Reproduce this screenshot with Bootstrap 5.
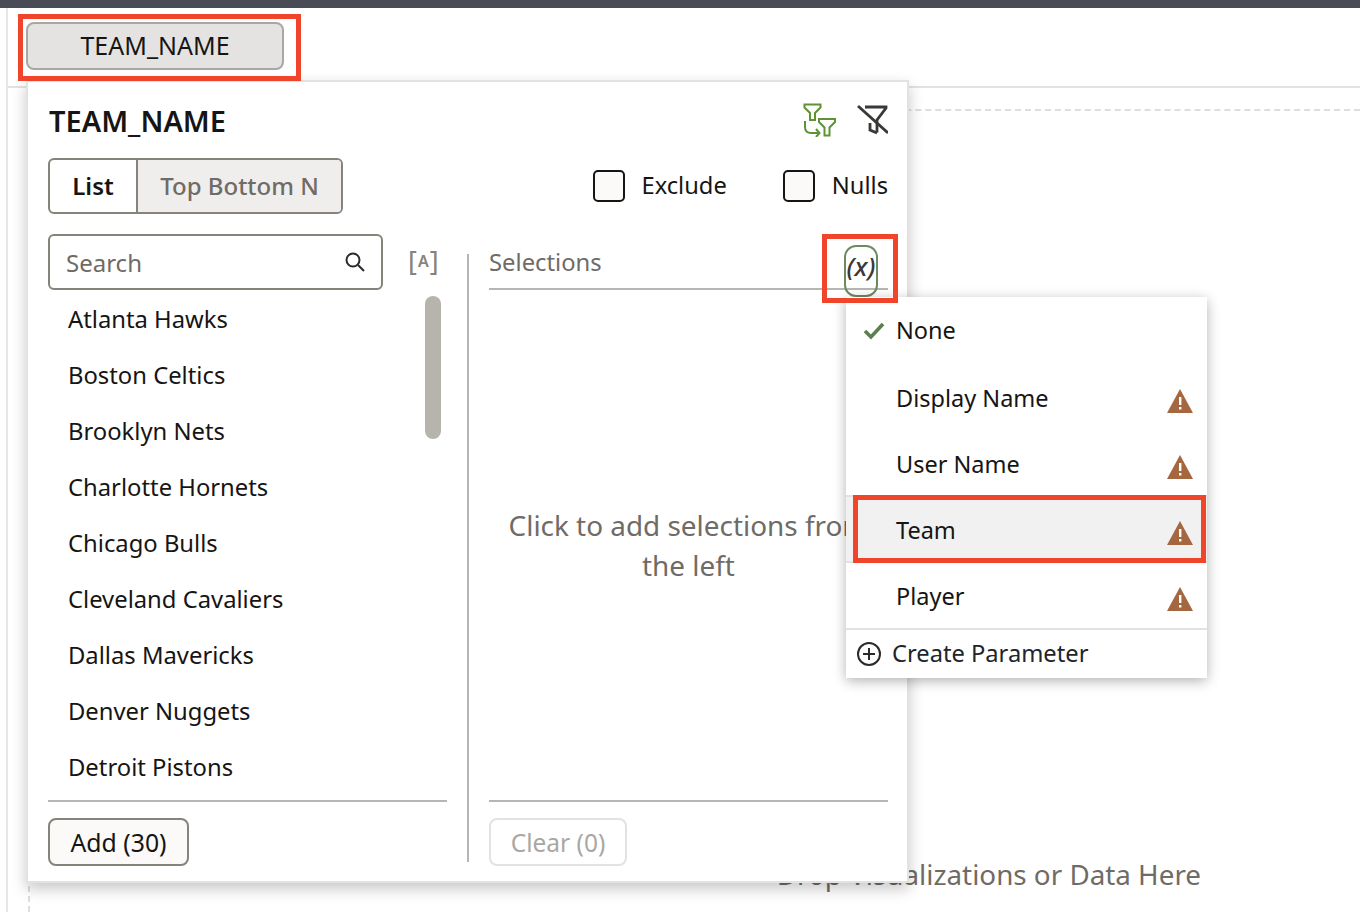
<!DOCTYPE html>
<html lang="en">
  <head>
    <meta charset="UTF-8" />
    <meta name="viewport" content="width=device-width, initial-scale=1" />
    <title>Filter TEAM_NAME</title>
    <link href="https://cdn.jsdelivr.net/npm/bootstrap@5.3.0/dist/css/bootstrap.min.css" rel="stylesheet" />
    <style>
      html, body { height: 912px; overflow: hidden; }
      body { font-family: "Noto Sans", sans-serif; font-size: 23.8px; color: #161513; background: #fff; position: relative; }
      .top-strip { height: 8px; background: #4a4c55; }
      .filter-bar { height: 80px; margin-left: 6px; border-left: 2px solid #e8e7e5; border-bottom: 2px solid #e4e2e0; }
      .work-area { margin-left: 6px; border-left: 2px solid #e8e7e5; height: 824px; padding: 21px 0 0 20px; }
      .drop-canvas { height: 803px; border-top: 2px dashed #dfdedc; border-left: 2px dashed #dfdedc; padding: 743px 159px 0 0; font-size: 27.8px; color: #6f6b66; }

      .red-box { position: absolute; border: 5px solid #f0452a; pointer-events: none; z-index: 5; }
      .red-chip { left: 18px; top: 14px; width: 283px; height: 67px; }
      .red-var { left: 822px; top: 234px; width: 76px; height: 69px; }
      .red-team { left: 853px; top: 495px; width: 353px; height: 68px; }

      .chip-btn { position: absolute; left: 26px; top: 22px; width: 258px; height: 48px; z-index: 3; background: #e4e3e1; border: 2px solid #a9a7a3; border-radius: 8px; font-size: 25px; color: #161513; padding: 0; }

      .filter-popup { position: absolute; left: 26px; top: 80px; width: 883px; height: 803px; background: #fff; border: 2px solid #e4e2e0; box-shadow: 0 6px 14px rgba(0,0,0,.22); z-index: 2; padding: 0 19px 0 20px; }
      .popup-head { height: 76px; }
      .popup-title { font-size: 29px; font-weight: 600; margin: 0; line-height: 1; padding-left: 1px; }
      .tool-icons { gap: 19px; }
      .mode-row { height: 56px; margin-bottom: 20px; }
      .mode-group { border: 2px solid #86827c; border-radius: 6px; overflow: hidden; height: 56px; }
      .mode-item { font-size: 24px; line-height: 52px; }
      .mode-on { font-weight: 600; width: 88px; text-align: center; border-right: 2px solid #86827c; }
      .mode-off { background: #efeeec; color: #6f6b66; font-weight: 500; width: 203px; text-align: center; }
      .check-pair { gap: 17px; font-size: 23.7px; }
      .check-pair .form-check-input { width: 32px; height: 32px; margin: 0; background-color: #fbfaf9; border: 2px solid #161513; border-radius: 5px; }
      .check-gap { gap: 56px; }

      .pane-wrap { height: 632px; }
      .left-pane { width: 399px; }
      .search-row { height: 56px; }
      .search-box { width: 335px; height: 56px; border: 2px solid #86827c; border-radius: 6px; padding: 0 16px; }
      .search-box input { border: 0; outline: 0; padding: 2px 0 0; background: transparent; font-size: 24px; width: 100%; }
      .search-box input::placeholder { color: #6f6b66; opacity: 1; }
      .case-tag { font-size: 27px; line-height: 1; color: #86827c; margin-left: 25px; margin-top: -3px; display: flex; align-items: center; gap: 1px; }
      .case-tag b { font-size: 16px; font-weight: 600; }
      .team-list { height: 510px; }
      .team-row { height: 56px; line-height: 58px; padding: 0 0 0 20px; background: transparent; border: 0; color: #161513; }
      .team-scroll { position: absolute; left: 377px; top: 6px; width: 16px; height: 143px; border-radius: 8px; background: #b7b4ae; }
      .pane-rule { height: 2px; background: #b8b6b2; }
      .pane-foot { padding-top: 16px; }
      .act-btn { height: 48px; border-radius: 8px; padding: 1px 0 0; line-height: 1; }
      .act-add { width: 141px; font-size: 24.8px; background: #fbfaf9; border: 2px solid #86827c; color: #161513; }
      .act-clear { width: 138px; font-size: 24.5px; --bs-btn-disabled-color: #a9a7a3; --bs-btn-disabled-border-color: #e4e2e0; --bs-btn-disabled-bg: #fff; --bs-btn-disabled-opacity: 1; border: 2px solid #e4e2e0; padding-top: 2px; }
      .pane-split { width: 2px; height: 608px; background: #b8b6b2; margin: 20px 20px 0 20px; }
      .right-pane { width: 399px; }
      .sel-head { height: 56px; border-bottom: 2px solid #b8b6b2; color: #6f6b66; line-height: 56px; }
      .sel-empty { height: 510px; font-size: 27.9px; line-height: 40px; color: #6f6b66; padding-top: 215px; }
      .var-btn { position: absolute; left: 844px; top: 245px; width: 34px; height: 52px; border: 2px solid #6b8a5e; border-radius: 12px; background: transparent; font-size: 26px; font-style: italic; font-weight: 500; color: #3b3936; padding: 0 0 11px; z-index: 3; line-height: 1; }

      .var-menu { position: absolute; left: 846px; top: 297px; width: 361px; height: 381px; margin: 0; padding: 0; display: block; background: #fff; border: 0; border-radius: 0; box-shadow: 0 3px 12px rgba(0,0,0,.3); z-index: 4; font-size: 23.5px; }
      .var-row { height: 66px; padding: 6px 14px 0 50px; color: #161513; position: relative; }
      .var-row svg.warn-icon { margin-top: 4px; }
      .var-none { padding-top: 2px; }
      .var-display { padding-top: 5px; }
      .var-team { height: 68px; padding-top: 4px; background: #f1f1f1; border-top: 2px solid #e4e2e0; border-bottom: 2px solid #e4e2e0; }
      .var-player { height: 65px; padding-top: 3px; }
      .var-check { position: absolute; left: 17px; top: 25px; }
      .var-create { height: 50px; border-top: 2px solid #e4e2e0; gap: 11px; padding: 0 0 0 11px; font-size: 23.7px; }
    </style>
  </head>
  <body>
    <div class="top-strip"></div>
    <div class="filter-bar"></div>
    <div class="work-area">
      <div class="drop-canvas d-flex justify-content-end">Drop Visualizations or Data Here</div>
    </div>

    <button type="button" class="btn chip-btn">TEAM_NAME</button>
    <div class="red-box red-chip"></div>

    <div class="filter-popup">
      <div class="popup-head d-flex justify-content-between align-items-center">
        <h5 class="popup-title">TEAM_NAME</h5>
        <div class="tool-icons d-flex align-items-center">
          <svg width="34" height="34" viewBox="0 0 34 34" fill="none" stroke="#5f9234" stroke-width="2">
            <path d="M1.5 1.5h16v3l-5.5 5.5v7H7v-7L1.5 4.5z" />
            <path d="M16 16h16v3l-5.5 5.5v8h-5v-8L16 19z" />
            <path d="M2 18v6q0 6 6 6h7M13 26l3.5 4-3.5 4" />
          </svg>
          <svg width="32" height="32" viewBox="0 0 32 32" fill="none" stroke="#3b3936" stroke-width="2.8">
            <path d="M9 3h21v1L21 16v12.5M14 19v7l7 3" />
            <path d="M2 2l30 27" />
          </svg>
        </div>
      </div>
      <div class="mode-row d-flex justify-content-between align-items-center">
        <div class="mode-group d-flex">
          <div class="mode-item mode-on">List</div>
          <div class="mode-item mode-off">Top Bottom N</div>
        </div>
        <div class="d-flex align-items-center check-gap">
          <label class="check-pair d-flex align-items-center"><input class="form-check-input" type="checkbox" />Exclude</label>
          <label class="check-pair d-flex align-items-center"><input class="form-check-input" type="checkbox" />Nulls</label>
        </div>
      </div>
      <div class="pane-wrap d-flex">
        <div class="left-pane">
          <div class="search-row d-flex align-items-center">
            <div class="search-box d-flex align-items-center">
              <input type="text" placeholder="Search" />
              <svg class="flex-shrink-0" width="20" height="20" viewBox="0 0 20 20" fill="none" stroke="#2b2a28" stroke-width="2"><circle cx="8" cy="8" r="6.5" /><path d="M13 13l6 6" /></svg>
            </div>
            <span class="case-tag">[<b>A</b>]</span>
          </div>
          <div class="team-list position-relative">
            <div class="list-group list-group-flush">
              <div class="list-group-item team-row">Atlanta Hawks</div>
              <div class="list-group-item team-row">Boston Celtics</div>
              <div class="list-group-item team-row">Brooklyn Nets</div>
              <div class="list-group-item team-row">Charlotte Hornets</div>
              <div class="list-group-item team-row">Chicago Bulls</div>
              <div class="list-group-item team-row">Cleveland Cavaliers</div>
              <div class="list-group-item team-row">Dallas Mavericks</div>
              <div class="list-group-item team-row">Denver Nuggets</div>
              <div class="list-group-item team-row">Detroit Pistons</div>
            </div>
            <div class="team-scroll"></div>
          </div>
          <div class="pane-rule"></div>
          <div class="pane-foot"><button type="button" class="btn act-btn act-add">Add (30)</button></div>
        </div>
        <div class="pane-split"></div>
        <div class="right-pane">
          <div class="sel-head">Selections</div>
          <div class="sel-empty text-center">Click to add selections from<br />the left</div>
          <div class="pane-rule"></div>
          <div class="pane-foot"><button type="button" class="btn act-btn act-clear" disabled>Clear (0)</button></div>
        </div>
      </div>
    </div>

    <button type="button" class="btn var-btn">(x)</button>
    <div class="red-box red-var"></div>

    <div class="dropdown-menu var-menu">
      <div class="var-row var-none d-flex align-items-center">
        <svg class="var-check" width="22" height="18" viewBox="0 0 22 18" fill="none" stroke="#5b7f4f" stroke-width="3.6"><path d="M2 9l6 6L20 2" /></svg>None
      </div>
      <div class="var-row var-display d-flex align-items-center justify-content-between">Display Name
        <svg class="warn-icon" width="26" height="24" viewBox="0 0 26 24"><path d="M13 0l13 24H0z" fill="#a5673f" /><path d="M12 8h2.4v8H12zM12 18h2.4v2.4H12z" fill="#fff" /></svg>
      </div>
      <div class="var-row d-flex align-items-center justify-content-between">User Name
        <svg class="warn-icon" width="26" height="24" viewBox="0 0 26 24"><path d="M13 0l13 24H0z" fill="#a5673f" /><path d="M12 8h2.4v8H12zM12 18h2.4v2.4H12z" fill="#fff" /></svg>
      </div>
      <div class="var-row var-team d-flex align-items-center justify-content-between">Team
        <svg class="warn-icon" width="26" height="24" viewBox="0 0 26 24"><path d="M13 0l13 24H0z" fill="#a5673f" /><path d="M12 8h2.4v8H12zM12 18h2.4v2.4H12z" fill="#fff" /></svg>
      </div>
      <div class="var-row var-player d-flex align-items-center justify-content-between">Player
        <svg class="warn-icon" width="26" height="24" viewBox="0 0 26 24"><path d="M13 0l13 24H0z" fill="#a5673f" /><path d="M12 8h2.4v8H12zM12 18h2.4v2.4H12z" fill="#fff" /></svg>
      </div>
      <div class="var-create d-flex align-items-center">
        <svg width="24" height="24" viewBox="0 0 24 24" fill="none" stroke="#2b2a28" stroke-width="2"><circle cx="12" cy="12" r="11" /><path d="M12 6v12M6 12h12" /></svg>Create Parameter
      </div>
    </div>
    <div class="red-box red-team"></div>

    <script src="https://cdn.jsdelivr.net/npm/bootstrap@5.3.0/dist/js/bootstrap.bundle.min.js"></script>
  </body>
</html>
